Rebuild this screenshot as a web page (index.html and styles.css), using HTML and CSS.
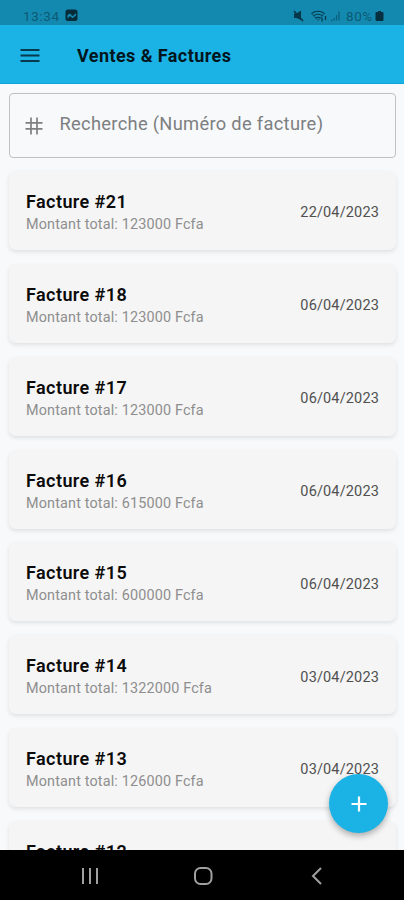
FILE: index.html
```html
<!DOCTYPE html>
<html lang="fr">
<head>
<meta charset="utf-8">
<title>Ventes &amp; Factures</title>
<link rel="stylesheet" href="styles.css">
</head>
<body>
<div class="screen">
  <div class="status">
    <span class="time">13:34</span>
    <svg class="picture" width="13" height="13" viewBox="0 0 13 13"><path fill-rule="evenodd" d="M3 .5h7q2.500 0 2.500 2.500v6.500q0 2.500-2.500 2.500H3Q.5 12 .5 9.500V3Q.5.5 3 .5zM2.500 6v3.500L5 7l2.500 2.300L11 6.500V4.200L7.500 7.200 5 4.500z" fill="currentColor"/></svg>
    <svg class="signals" width="50" height="14" viewBox="0 0 50 14" fill="none" stroke="currentColor">
      <path d="M1 4.500h2.500L8 1.500V11L3.500 9H1z" fill="currentColor" stroke="none"/><path d="M1 2l9 10" stroke-width="1.600"/>
      <path d="M18.500 4.500q6.500-4.500 13 0M20.500 6.700q4.500-3 9 0M22.700 9q2.300-1.600 4.600 0" stroke-width="1.100"/><path d="M18.500 4.500L25 11.500l6.500-7" stroke-width=".6"/><path d="M29 8.500v4M32.500 7v4" stroke-width="1.300"/>
      <path d="M38 11.500h1.500M41 11.500V9M43.500 11.500V6M46 11.500V2.500" stroke-width="1.300" opacity=".5"/>
    </svg>
    <span class="percent">80%</span>
    <svg class="battery" width="9" height="12" viewBox="0 0 9 12"><path d="M3 1h3v1h1.500q1 0 1 1v7q0 1-1 1h-6q-1 0-1-1V3q0-1 1-1H3z" fill="currentColor"/></svg>
  </div>
  <header class="appbar">
    <svg class="menu" width="20" height="15" viewBox="0 0 20 15"><path d="M.5 2h19M.5 7.500h19M.5 13h19" stroke="currentColor" stroke-width="2"/></svg>
    <h1>Ventes &amp; Factures</h1>
  </header>
  <main class="content">
    <div class="search">
      <svg width="18" height="18" viewBox="0 0 18 18"><path d="M.5 5.900h17M.5 11.900h17M6 .5v17M12 .5v17" stroke="currentColor" stroke-width="1.700"/></svg>
      <span class="hint">Recherche (Numéro de facture)</span>
    </div>
    <div class="list">
      <article class="card"><div><h2>Facture #21</h2><p>Montant total: 123000 Fcfa</p></div><time>22/04/2023</time></article>
      <article class="card"><div><h2>Facture #18</h2><p>Montant total: 123000 Fcfa</p></div><time>06/04/2023</time></article>
      <article class="card"><div><h2>Facture #17</h2><p>Montant total: 123000 Fcfa</p></div><time>06/04/2023</time></article>
      <article class="card"><div><h2>Facture #16</h2><p>Montant total: 615000 Fcfa</p></div><time>06/04/2023</time></article>
      <article class="card"><div><h2>Facture #15</h2><p>Montant total: 600000 Fcfa</p></div><time>06/04/2023</time></article>
      <article class="card"><div><h2>Facture #14</h2><p>Montant total: 1322000 Fcfa</p></div><time>03/04/2023</time></article>
      <article class="card"><div><h2>Facture #13</h2><p>Montant total: 126000 Fcfa</p></div><time>03/04/2023</time></article>
      <article class="card"><div><h2>Facture #12</h2></div></article>
    </div>
    <div class="fab"><svg width="16" height="16" viewBox="0 0 16 16"><path d="M.5 8h15M8 .5v15" stroke="currentColor" stroke-width="2.200"/></svg></div>
  </main>
  <nav class="navbar">
    <svg width="18" height="18" viewBox="0 0 18 18"><path d="M2 1v16M9 1v16M16 1v16" stroke="currentColor" stroke-width="2"/></svg>
    <svg width="20" height="18" viewBox="0 0 20 18"><rect x="1" y="1" width="16.500" height="16" rx="5.500" fill="none" stroke="currentColor" stroke-width="2"/></svg>
    <svg width="12" height="18" viewBox="0 0 12 18"><path d="M10 1L2 9l8 8" fill="none" stroke="currentColor" stroke-width="2"/></svg>
  </nav>
</div>
</body>
</html>
```
FILE: styles.css
```css
* { box-sizing: border-box; }
body { margin: 0; font-family: Roboto, sans-serif; }
h1, h2, p { margin: 0; white-space: nowrap; }
svg { display: block; flex: none; }
.screen { width: 404px; height: 900px; display: flex; flex-direction: column; overflow: hidden; background: #f7f9fb; }
.status { height: 25px; flex: none; display: flex; align-items: center; padding: 6px 20px 0 23px; background: #1389af; color: #083b4c; font-size: 13.500px; line-height: 18px; }
.time { width: 42px; color: #0d5a74; letter-spacing: .6px; }
.picture { color: #062c3a; }
.signals { margin-left: auto; color: #07384a; }
.percent { width: 29px; margin-left: 3px; font-size: 13.500px; color: #0d5a74; letter-spacing: .6px; white-space: nowrap; }
.battery { color: #06303f; }
.appbar { height: 59px; flex: none; display: flex; align-items: center; padding: 3px 20px 0; background: #1bb3e6; border-bottom: 1px solid #12a3d6; }
.menu { color: #063a4c; }
h1 { margin-left: 37px; font-size: 18px; line-height: 24px; font-weight: 700; letter-spacing: .42px; color: #03151c; }
.content { position: relative; height: 766px; flex: none; padding: 9px 8px 0 9px; overflow: hidden; }
.search { height: 65px; display: flex; align-items: center; padding: 0 15px; border: 1px solid #bfc1c3; border-radius: 4px; color: #7d7f81; }
.hint { margin: -4px 0 0 16.500px; font-size: 18.300px; line-height: 24px; letter-spacing: .31px; white-space: nowrap; }
.list { display: flex; flex-direction: column; gap: 13.850px; padding-top: 13px; }
.card { height: 79px; flex: none; display: flex; justify-content: space-between; padding: 19px 17px 0; border-radius: 7px; background: #f5f5f5; box-shadow: 0 2px 4px rgba(0, 0, 0, .1); }
h2 { font-size: 18px; line-height: 23px; font-weight: 600; letter-spacing: .42px; color: #0b0b0b; }
p { margin-top: 2px; font-size: 14.400px; line-height: 20px; letter-spacing: .16px; color: #8e8e8e; }
time { padding-top: 13.400px; font-size: 14.500px; line-height: 19px; letter-spacing: .15px; color: #505050; }
.fab { position: absolute; right: 16px; bottom: 17px; width: 59px; height: 59px; display: flex; align-items: center; justify-content: center; border-radius: 50%; background: #1bb3e6; color: #fff; box-shadow: 0 3px 6px rgba(0, 0, 0, .3); }
.navbar { height: 50px; flex: none; display: flex; align-items: center; justify-content: space-between; padding: 2px 81px 0 81px; background: #000; color: #a0a0a0; }
.navbar svg:nth-child(2) { margin-left: -2px; }
```
